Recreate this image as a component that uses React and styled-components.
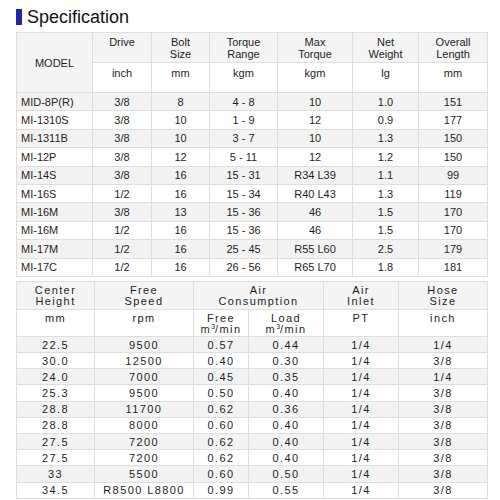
import React from 'react';
import styled, { createGlobalStyle } from 'styled-components';

const GlobalStyle = createGlobalStyle`
  body {
    margin: 0;
    background: #ffffff;
    font-family: 'Liberation Sans', Arial, sans-serif;
    color: #1e1e1e;
  }
`;

const Page = styled.div`
  width: 500px;
  height: 500px;
  padding: 8px 0 0 16px;
  box-sizing: border-box;
  overflow: hidden;
`;

const TitleBar = styled.div`
  display: flex;
  align-items: center;
  gap: 5px;
  height: 18px;
  margin-bottom: 6px;
`;

const TitleMark = styled.span`
  width: 6px;
  height: 16px;
  background: #1b2aa0;
`;

const Title = styled.h1`
  margin: 0;
  font-size: 18px;
  font-weight: normal;
  color: #111;
  line-height: 18px;
`;

const SpecTable = styled.table`
  width: 471px;
  table-layout: fixed;
  border-collapse: collapse;
  font-size: 11px;
  letter-spacing: ${(p) => (p.$wide ? '1.4px' : '0')};
  margin-top: ${(p) => (p.$gap ? '4px' : '0')};
  td, th {
    box-sizing: border-box;
    border: 1px solid #dedede;
    text-align: center;
    font-weight: normal;
    padding: 0;
    overflow: hidden;
    white-space: nowrap;
  }
`;

const HeadCell = styled.th`
  vertical-align: ${(p) => (p.$middle ? 'middle' : 'top')};
  background: ${(p) => (p.$shade ? '#f4f4f4' : '#ffffff')};
  height: ${(p) => p.$h}px;
  padding-top: ${(p) => (p.$middle ? 0 : p.$pt ?? 3)}px !important;
  line-height: ${(p) => p.$lh ?? 12}px;
`;

const Row = styled.tr`
  height: ${(p) => p.$h}px;
  background: ${(p) => (p.$alt ? '#f2f2f2' : '#ffffff')};
`;

const Cell = styled.td`
  text-align: ${(p) => (p.$left ? 'left' : 'center')} !important;
  padding-left: ${(p) => (p.$left ? '4px' : '0')} !important;
  line-height: 12px;
`;

const Sup = styled.span`
  font-size: 7px;
  position: relative;
  top: -4px;
  letter-spacing: 0;
`;

const specRows = [
  ['MID-8P(R)', '3/8', '8', '4 - 8', '10', '1.0', '151'],
  ['MI-1310S', '3/8', '10', '1 - 9', '12', '0.9', '177'],
  ['MI-1311B', '3/8', '10', '3 - 7', '10', '1.3', '150'],
  ['MI-12P', '3/8', '12', '5 - 11', '12', '1.2', '150'],
  ['MI-14S', '3/8', '16', '15 - 31', 'R34 L39', '1.1', '99'],
  ['MI-16S', '1/2', '16', '15 - 34', 'R40 L43', '1.3', '119'],
  ['MI-16M', '3/8', '13', '15 - 36', '46', '1.5', '170'],
  ['MI-16M', '1/2', '16', '15 - 36', '46', '1.5', '170'],
  ['MI-17M', '1/2', '16', '25 - 45', 'R55 L60', '2.5', '179'],
  ['MI-17C', '1/2', '16', '26 - 56', 'R65 L70', '1.8', '181'],
];

const airRows = [
  ['22.5', '9500', '0.57', '0.44', '1/4', '1/4'],
  ['30.0', '12500', '0.40', '0.30', '1/4', '3/8'],
  ['24.0', '7000', '0.45', '0.35', '1/4', '1/4'],
  ['25.3', '9500', '0.50', '0.40', '1/4', '3/8'],
  ['28.8', '11700', '0.62', '0.36', '1/4', '3/8'],
  ['28.8', '8000', '0.60', '0.40', '1/4', '3/8'],
  ['27.5', '7200', '0.62', '0.40', '1/4', '3/8'],
  ['27.5', '7200', '0.62', '0.40', '1/4', '3/8'],
  ['33', '5500', '0.60', '0.50', '1/4', '3/8'],
  ['34.5', 'R8500 L8800', '0.99', '0.55', '1/4', '3/8'],
];

const specCols = [76, 59, 58, 68, 75, 66, 69];
const specHeads = [
  ['Drive', 'inch'],
  ['Bolt', 'Size', 'mm'],
  ['Torque', 'Range', 'kgm'],
  ['Max', 'Torque', 'kgm'],
  ['Net', 'Weight', 'lg'],
  ['Overall', 'Length', 'mm'],
];

const airCols = [78, 99, 55, 75, 75, 89];

const M3 = () => (
  <>
    m<Sup>3</Sup>/min
  </>
);

const App = () => {
  return (
    <Page>
      <GlobalStyle />
      <TitleBar>
        <TitleMark />
        <Title>Specification</Title>
      </TitleBar>

      <SpecTable>
        <colgroup>
          {specCols.map((w, i) => (
            <col key={i} style={{ width: w }} />
          ))}
        </colgroup>
        <thead>
          <tr>
            <HeadCell rowSpan={2} $middle $shade $h={30}>
              MODEL
            </HeadCell>
            {specHeads.map((h, i) => (
              <HeadCell key={i} $shade $h={30} $pt={3}>
                {h.length === 3 ? (
                  <>
                    {h[0]}
                    <br />
                    {h[1]}
                  </>
                ) : (
                  h[0]
                )}
              </HeadCell>
            ))}
          </tr>
          <tr>
            {specHeads.map((h, i) => (
              <HeadCell key={i} $h={30} $pt={4}>
                {h[h.length - 1]}
              </HeadCell>
            ))}
          </tr>
        </thead>
        <tbody>
          {specRows.map((r, i) => (
            <Row key={i} $alt={i % 2 === 0} $h={18.4}>
              {r.map((v, j) => (
                <Cell key={j} $left={j === 0}>
                  {v}
                </Cell>
              ))}
            </Row>
          ))}
        </tbody>
      </SpecTable>

      <SpecTable $wide $gap>
        <colgroup>
          {airCols.map((w, i) => (
            <col key={i} style={{ width: w }} />
          ))}
        </colgroup>
        <thead>
          <tr>
            <HeadCell $shade $h={28} $pt={3} $lh={11}>
              Center
              <br />
              Height
            </HeadCell>
            <HeadCell $shade $h={28} $pt={3} $lh={11}>
              Free
              <br />
              Speed
            </HeadCell>
            <HeadCell colSpan={2} $shade $h={28} $pt={3} $lh={11}>
              Air
              <br />
              Consumption
            </HeadCell>
            <HeadCell $shade $h={28} $pt={3} $lh={11}>
              Air
              <br />
              Inlet
            </HeadCell>
            <HeadCell $shade $h={28} $pt={3} $lh={11}>
              Hose
              <br />
              Size
            </HeadCell>
          </tr>
          <tr>
            <HeadCell $h={27} $pt={3} $lh={11}>mm</HeadCell>
            <HeadCell $h={27} $pt={3} $lh={11}>rpm</HeadCell>
            <HeadCell $h={27} $pt={3} $lh={11}>
              Free
              <br />
              <M3 />
            </HeadCell>
            <HeadCell $h={27} $pt={3} $lh={11}>
              Load
              <br />
              <M3 />
            </HeadCell>
            <HeadCell $h={27} $pt={3} $lh={11}>PT</HeadCell>
            <HeadCell $h={27} $pt={3} $lh={11}>inch</HeadCell>
          </tr>
        </thead>
        <tbody>
          {airRows.map((r, i) => (
            <Row key={i} $alt={i % 2 === 0} $h={16.2}>
              {r.map((v, j) => (
                <Cell key={j}>{v}</Cell>
              ))}
            </Row>
          ))}
        </tbody>
      </SpecTable>
    </Page>
  );
};

export default App;
